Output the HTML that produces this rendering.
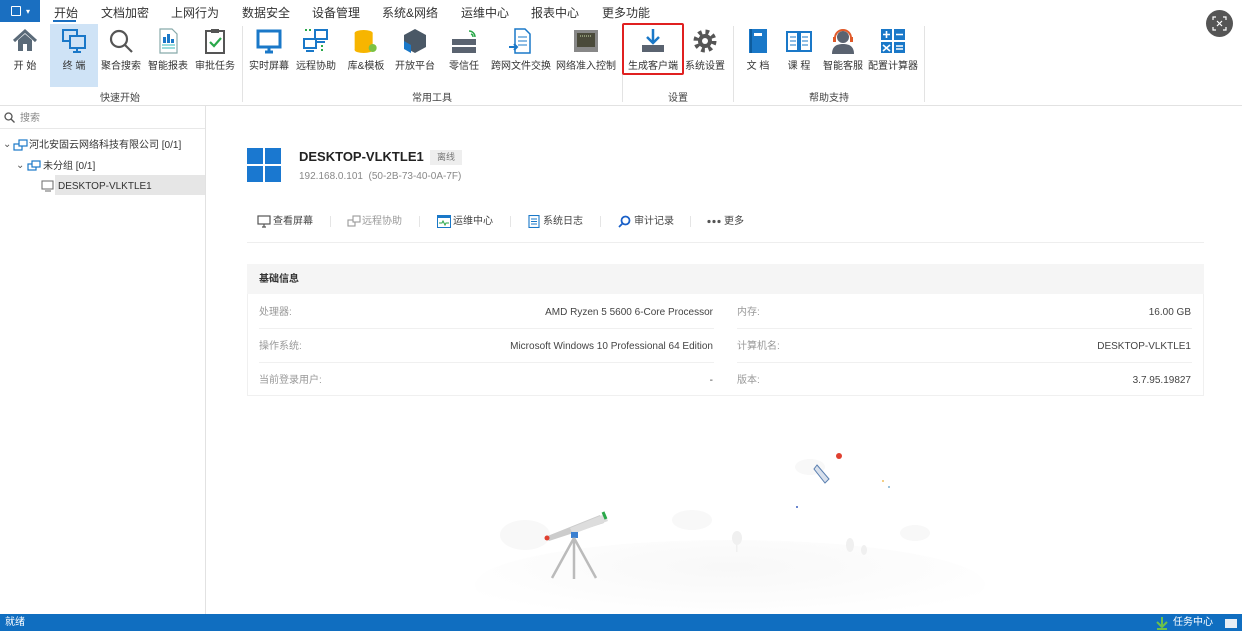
<!DOCTYPE html>
<html><head><meta charset="utf-8"><style>
*{margin:0;padding:0;box-sizing:border-box}
body{width:1242px;height:631px;overflow:hidden;background:#fff;font-family:"Liberation Sans","Noto Sans CJK SC",sans-serif;font-size:12px;color:#333;position:relative}
.a{position:absolute;white-space:nowrap;line-height:14px}
.tab{top:6px;font-size:12px;color:#333}
.btn{position:absolute;top:27px;text-align:center;transform:translateX(-50%);font-size:10px;color:#333;line-height:14px}
.btn svg{display:block;margin:0 auto 5px;width:28px;height:28px}
.grp{top:92px;font-size:10px;color:#444}
.sep{position:absolute;top:26px;width:1px;height:76px;background:#e3e3e3}
.lbl{color:#999;font-size:10px}
.val{color:#444;font-size:10px;text-align:right}
.act{top:215px;font-size:10px;color:#444}
.vs{position:absolute;top:216px;width:1px;height:11px;background:#e5e5e5}
</style></head><body>
<!-- menu bar -->
<div class="a" style="left:0;top:0;width:40px;height:22px;background:#1a6fc1"></div>
<div class="a" style="left:11px;top:6px;width:10px;height:10px;border:1.5px solid #fff;border-radius:1px"></div>
<div class="a" style="left:26px;top:5px;color:#fff;font-size:8px">▾</div>
<div class="a tab" style="left:54px">开始</div>
<div class="a" style="left:53px;top:20px;width:23px;height:2px;background:#1a6fc1"></div>
<div class="a tab" style="left:101px">文档加密</div>
<div class="a tab" style="left:171px">上网行为</div>
<div class="a tab" style="left:242px">数据安全</div>
<div class="a tab" style="left:312px">设备管理</div>
<div class="a tab" style="left:382px">系统&amp;网络</div>
<div class="a tab" style="left:461px">运维中心</div>
<div class="a tab" style="left:531px">报表中心</div>
<div class="a tab" style="left:602px">更多功能</div>
<div class="a" style="left:1206px;top:10px;width:27px;height:27px;border-radius:50%;background:#555"></div>
<svg class="a" style="left:1211px;top:15px" width="17" height="17" viewBox="0 0 17 17" fill="none" stroke="#fff" stroke-width="1.2"><path d="M2 5V2h3M12 2h3v3M15 12v3h-3M5 15H2v-3M6 6l5 5M11 6l-5 5"/></svg>

<!-- ribbon -->
<div class="a" style="left:50px;top:24px;width:48px;height:63px;background:#cfe3f6"></div>
<div class="btn" style="left:25px"><svg viewBox="0 0 28 28"><path d="M3 14L14 4l11 10" stroke="#5a6a78" stroke-width="3" fill="none"/><path d="M7 13v11h14V13L14 7z" fill="#5a6a78"/><rect x="12" y="17" width="4" height="7" fill="#fff"/></svg>开 始</div>
<div class="btn" style="left:74px"><svg viewBox="0 0 28 28" fill="none" stroke="#1a78c8" stroke-width="2"><rect x="3" y="3" width="14" height="11"/><rect x="10" y="9" width="15" height="12" fill="#cfe3f6"/><path d="M17 21v3M13 25h8"/></svg>终 端</div>
<div class="btn" style="left:121px"><svg viewBox="0 0 28 28" fill="none" stroke="#555" stroke-width="2.2"><circle cx="12" cy="12" r="8"/><path d="M18 18l7 7"/></svg>聚合搜索</div>
<div class="btn" style="left:168px"><svg viewBox="0 0 28 28"><path d="M6 2h12l5 5v19H6z" fill="#fff" stroke="#8aa" stroke-width="1.2"/><rect x="9" y="10" width="3" height="6" fill="#1a78c8"/><rect x="13" y="7" width="3" height="9" fill="#1a78c8"/><rect x="17" y="12" width="3" height="4" fill="#1a78c8"/><path d="M8 18h13M8 21h13" stroke="#3bb" stroke-width="1"/></svg>智能报表</div>
<div class="btn" style="left:215px"><svg viewBox="0 0 28 28" fill="none"><rect x="5" y="4" width="18" height="22" stroke="#555" stroke-width="2"/><rect x="10" y="2" width="8" height="4" fill="#555"/><path d="M9 15l4 4 7-8" stroke="#2aa84a" stroke-width="2.2"/></svg>审批任务</div>
<div class="sep" style="left:242px"></div>
<div class="btn" style="left:269px"><svg viewBox="0 0 28 28"><rect x="3" y="4" width="22" height="16" fill="none" stroke="#1a78c8" stroke-width="3"/><path d="M10 25h8M14 20v5" stroke="#1a78c8" stroke-width="3"/></svg>实时屏幕</div>
<div class="btn" style="left:316px"><svg viewBox="0 0 28 28" fill="none" stroke="#1a78c8" stroke-width="2"><rect x="2" y="12" width="12" height="9"/><rect x="13" y="3" width="12" height="9"/><path d="M4 24h8M15 15h8" /><path d="M3 3h6M20 18v6" stroke="#2aa84a" stroke-dasharray="2 2"/></svg>远程协助</div>
<div class="btn" style="left:366px"><svg viewBox="0 0 28 28"><ellipse cx="12" cy="6" rx="9" ry="3" fill="#f7b500"/><rect x="3" y="6" width="18" height="17" fill="#f7b500"/><ellipse cx="12" cy="23" rx="9" ry="3" fill="#f7b500"/><circle cx="21" cy="21" r="4" fill="#7cc242"/></svg>库&amp;模板</div>
<div class="btn" style="left:415px"><svg viewBox="0 0 28 28"><path d="M14 2l11 6v12l-11 6-11-6V8z" fill="#4a5866"/><path d="M3 14l7 4v8l-7-4z" fill="#1a78c8"/></svg>开放平台</div>
<div class="btn" style="left:464px"><svg viewBox="0 0 28 28"><rect x="2" y="12" width="24" height="6" fill="#5a6370"/><rect x="2" y="20" width="24" height="6" fill="#5a6370"/><path d="M19 4a6 6 0 0 1 6 6M21 7a3 3 0 0 1 2 3" stroke="#2aa84a" stroke-width="1.5" fill="none"/></svg>零信任</div>
<div class="btn" style="left:521px"><svg viewBox="0 0 28 28"><path d="M8 2h10l5 5v19H8z" fill="#fff" stroke="#1a78c8" stroke-width="1.5"/><path d="M11 10h9M11 14h9M11 18h9" stroke="#1a78c8"/><path d="M2 20h8M7 17l3 3-3 3" stroke="#1a78c8" stroke-width="2" fill="none"/></svg>跨网文件交换</div>
<div class="btn" style="left:586px"><svg viewBox="0 0 28 28"><rect x="2" y="3" width="24" height="22" fill="#888"/><rect x="5" y="6" width="18" height="14" fill="#4a4a3a"/><path d="M8 9h12" stroke="#cda" stroke-dasharray="1 1"/></svg>网络准入控制</div>
<div class="sep" style="left:622px"></div>
<div class="btn" style="left:653px"><svg viewBox="0 0 28 28"><path d="M14 2v13M8 10l6 6 6-6" stroke="#1a78c8" stroke-width="2.5" fill="none"/><rect x="3" y="18" width="22" height="7" fill="#5a6370"/></svg>生成客户端</div>
<div class="a" style="left:622px;top:23px;width:62px;height:52px;border:2px solid #e02020;border-radius:2px"></div>
<div class="btn" style="left:705px"><svg viewBox="0 0 28 28"><circle cx="14" cy="14" r="9" fill="none" stroke="#555" stroke-width="5" stroke-dasharray="3.5 3.6"/><circle cx="14" cy="14" r="7" fill="#555"/><circle cx="14" cy="14" r="3" fill="#fff"/></svg>系统设置</div>
<div class="sep" style="left:733px"></div>
<div class="btn" style="left:758px"><svg viewBox="0 0 28 28"><rect x="5" y="2" width="18" height="24" fill="#1a78c8"/><rect x="10" y="6" width="8" height="3" fill="#fff"/><path d="M7 2v24" stroke="#0d5c9e" stroke-width="2"/></svg>文 档</div>
<div class="btn" style="left:799px"><svg viewBox="0 0 28 28"><path d="M2 5h11v19H2zM15 5h11v19H15z" fill="#fff" stroke="#1a78c8" stroke-width="2"/><path d="M5 10h6M5 14h6M5 18h6M17 10h6M17 14h6M17 18h6" stroke="#1a78c8"/></svg>课 程</div>
<div class="btn" style="left:843px"><svg viewBox="0 0 28 28"><circle cx="14" cy="10" r="6" fill="#5a6370"/><path d="M3 27c0-8 5-10 11-10s11 2 11 10z" fill="#5a6370"/><path d="M6 11a8 8 0 0 1 16 0" stroke="#e05a2a" stroke-width="2" fill="none"/><rect x="4" y="10" width="3" height="5" fill="#e05a2a"/><rect x="21" y="10" width="3" height="5" fill="#e05a2a"/></svg>智能客服</div>
<div class="btn" style="left:893px"><svg viewBox="0 0 28 28"><rect x="2" y="2" width="11" height="11" fill="#1a78c8"/><rect x="15" y="2" width="11" height="11" fill="#1a78c8"/><rect x="2" y="15" width="11" height="11" fill="#1a78c8"/><rect x="15" y="15" width="11" height="11" fill="#1a78c8"/><path d="M4 7.5h7M7.5 4v7M17 7.5h7M4 18l7 6M11 18l-7 6M17 19h7M17 22h7" stroke="#fff" stroke-width="1.6"/></svg>配置计算器</div>
<div class="sep" style="left:924px"></div>
<div class="a grp" style="left:100px">快速开始</div>
<div class="a grp" style="left:412px">常用工具</div>
<div class="a grp" style="left:668px">设置</div>
<div class="a grp" style="left:809px">帮助支持</div>
<div class="a" style="left:0;top:105px;width:1242px;height:1px;background:#e2e2e2"></div>

<!-- left panel -->
<div class="a" style="left:205px;top:106px;width:1px;height:508px;background:#e2e2e2"></div>
<svg class="a" style="left:4px;top:112px" width="11" height="11" viewBox="0 0 11 11" fill="none" stroke="#555" stroke-width="1.3"><circle cx="4.5" cy="4.5" r="3.5"/><path d="M7 7l3.5 3.5"/></svg>
<div class="a" style="left:20px;top:112px;font-size:10px;color:#888">搜索</div>
<div class="a" style="left:0;top:128px;width:205px;height:1px;background:#e8e8e8"></div>
<div class="a" style="left:3px;top:138px;font-size:10px;color:#555">⌄</div>
<svg class="a" style="left:13px;top:139px" width="15" height="13" viewBox="0 0 15 13" fill="none" stroke="#1a78c8" stroke-width="1.2"><rect x="1" y="5" width="8" height="6"/><rect x="6" y="1" width="8" height="6" fill="#fff"/></svg>
<div class="a" style="left:29px;top:139px;font-size:10px;color:#333">河北安固云网络科技有限公司 [0/1]</div>
<div class="a" style="left:16px;top:159px;font-size:10px;color:#555">⌄</div>
<svg class="a" style="left:27px;top:160px" width="14" height="13" viewBox="0 0 14 13" fill="none" stroke="#1a78c8" stroke-width="1.2"><rect x="1" y="4" width="8" height="6"/><rect x="5" y="1" width="8" height="6" fill="#fff"/></svg>
<div class="a" style="left:43px;top:160px;font-size:10px;color:#333">未分组 [0/1]</div>
<div class="a" style="left:55px;top:175px;width:150px;height:20px;background:#e6e6e6"></div>
<svg class="a" style="left:41px;top:180px" width="14" height="13" viewBox="0 0 14 13" fill="none" stroke="#777" stroke-width="1.1"><rect x="1" y="1" width="11" height="8"/><path d="M4 11h6"/></svg>
<div class="a" style="left:58px;top:180px;font-size:10px;color:#333">DESKTOP-VLKTLE1</div>

<!-- device header -->
<div class="a" style="left:247px;top:148px;width:16px;height:16px;background:#1a78d0"></div>
<div class="a" style="left:265px;top:148px;width:16px;height:16px;background:#1a78d0"></div>
<div class="a" style="left:247px;top:166px;width:16px;height:16px;background:#1a78d0"></div>
<div class="a" style="left:265px;top:166px;width:16px;height:16px;background:#1a78d0"></div>
<div class="a" style="left:299px;top:150px;font-size:13px;font-weight:bold;color:#222">DESKTOP-VLKTLE1</div>
<div class="a" style="left:430px;top:150px;width:32px;height:15px;background:#eee;font-size:9px;color:#777;text-align:center;line-height:15px">离线</div>
<div class="a" style="left:299px;top:170px;font-size:10px;color:#888">192.168.0.101&nbsp; (50-2B-73-40-0A-7F)</div>

<!-- actions -->
<svg class="a" style="left:257px;top:215px" width="14" height="13" viewBox="0 0 14 13" fill="none" stroke="#555" stroke-width="1.2"><rect x="1" y="1" width="12" height="8"/><path d="M5 12h4M7 9v3"/></svg>
<div class="a act" style="left:273px">查看屏幕</div>
<div class="vs" style="left:330px"></div>
<svg class="a" style="left:347px;top:215px" width="14" height="13" viewBox="0 0 14 13" fill="none" stroke="#999" stroke-width="1.1"><rect x="1" y="5" width="7" height="6"/><rect x="6" y="1" width="7" height="6" fill="#fff"/></svg>
<div class="a act" style="left:362px;color:#999">远程协助</div>
<div class="vs" style="left:419px"></div>
<svg class="a" style="left:437px;top:215px" width="14" height="13" viewBox="0 0 14 13"><rect x="0.5" y="0.5" width="13" height="12" fill="#fff" stroke="#1a78c8"/><rect x="0" y="0" width="14" height="3" fill="#1a78c8"/><path d="M2 8h3l1-2 2 4 1-2h3" stroke="#2aa84a" fill="none"/></svg>
<div class="a act" style="left:453px">运维中心</div>
<div class="vs" style="left:510px"></div>
<svg class="a" style="left:528px;top:215px" width="12" height="13" viewBox="0 0 12 13" fill="none" stroke="#1a78c8" stroke-width="1.1"><rect x="1" y="0.5" width="10" height="12"/><path d="M3 4h6M3 6.5h6M3 9h6"/></svg>
<div class="a act" style="left:543px">系统日志</div>
<div class="vs" style="left:600px"></div>
<svg class="a" style="left:618px;top:215px" width="13" height="13" viewBox="0 0 13 13" fill="none" stroke="#1a60c8" stroke-width="1.8"><circle cx="7.5" cy="5.5" r="4"/><path d="M4.5 8.5L1 12"/></svg>
<div class="a act" style="left:634px">审计记录</div>
<div class="vs" style="left:690px"></div>
<svg class="a" style="left:707px;top:219px" width="14" height="5" viewBox="0 0 14 5" fill="#555"><circle cx="2" cy="2.5" r="1.6"/><circle cx="7" cy="2.5" r="1.6"/><circle cx="12" cy="2.5" r="1.6"/></svg>
<div class="a act" style="left:724px">更多</div>
<div class="a" style="left:247px;top:242px;width:957px;height:1px;background:#eee"></div>

<!-- info card -->
<div class="a" style="left:247px;top:264px;width:957px;height:132px;border:1px solid #f0f0f0"></div>
<div class="a" style="left:247px;top:264px;width:957px;height:30px;background:#f5f5f5"></div>
<div class="a" style="left:259px;top:273px;font-size:10px;font-weight:bold;color:#333">基础信息</div>
<div class="a" style="left:259px;top:328px;width:455px;height:1px;background:#f0f0f0"></div>
<div class="a" style="left:259px;top:362px;width:455px;height:1px;background:#f0f0f0"></div>
<div class="a" style="left:737px;top:328px;width:455px;height:1px;background:#f0f0f0"></div>
<div class="a" style="left:737px;top:362px;width:455px;height:1px;background:#f0f0f0"></div>
<div class="a lbl" style="left:259px;top:306px">处理器:</div>
<div class="a lbl" style="left:259px;top:340px">操作系统:</div>
<div class="a lbl" style="left:259px;top:374px">当前登录用户:</div>
<div class="a val" style="right:529px;top:306px">AMD Ryzen 5 5600 6-Core Processor</div>
<div class="a val" style="right:529px;top:340px">Microsoft Windows 10 Professional 64 Edition</div>
<div class="a val" style="right:529px;top:374px">-</div>
<div class="a lbl" style="left:737px;top:306px">内存:</div>
<div class="a lbl" style="left:737px;top:340px">计算机名:</div>
<div class="a lbl" style="left:737px;top:374px">版本:</div>
<div class="a val" style="right:51px;top:306px">16.00 GB</div>
<div class="a val" style="right:51px;top:340px">DESKTOP-VLKTLE1</div>
<div class="a val" style="right:51px;top:374px">3.7.95.19827</div>

<!-- illustration -->
<svg class="a" style="left:470px;top:440px" width="520" height="174" viewBox="0 0 520 174">
<defs><radialGradient id="g" cx="0.5" cy="0.3" r="0.6"><stop offset="0" stop-color="#f8f8f8"/><stop offset="1" stop-color="#fff"/></radialGradient></defs>
<ellipse cx="260" cy="145" rx="255" ry="45" fill="url(#g)"/>
<ellipse cx="55" cy="95" rx="25" ry="15" fill="#f8f8f8"/>
<ellipse cx="222" cy="80" rx="20" ry="10" fill="#f8f8f8"/>
<ellipse cx="445" cy="93" rx="15" ry="8" fill="#f8f8f8"/>
<ellipse cx="340" cy="27" rx="15" ry="8" fill="#f8f8f8"/>
<ellipse cx="267" cy="98" rx="5" ry="7" fill="#f0f0f0"/><rect x="266" y="100" width="1.5" height="12" fill="#f0f0f0"/>
<ellipse cx="380" cy="105" rx="4" ry="7" fill="#f0f0f0"/><ellipse cx="394" cy="110" rx="3" ry="5" fill="#f0f0f0"/>
<path d="M75 97l55-22 4 8-55 18z" fill="#ccc"/><path d="M100 88l35-14 3 7-35 13z" fill="#ddd"/>
<circle cx="77" cy="98" r="2.5" fill="#e04030"/><path d="M133 72l3 7" stroke="#2aa84a" stroke-width="3"/>
<rect x="101" y="92" width="7" height="6" fill="#3a7fd0"/>
<path d="M104 98L82 138M104 98L126 138M104 98v41" stroke="#bbb" stroke-width="2.5"/>
<circle cx="369" cy="16" r="3" fill="#e04030"/>
<path d="M347 25l12 14-4 4-11-14z" fill="#d8e0ec" stroke="#5a7fb0"/>
<circle cx="327" cy="67" r="1" fill="#3a5fc0"/><circle cx="419" cy="47" r="1" fill="#7aaed0"/><circle cx="413" cy="41" r="1" fill="#f0c060"/>
</svg>

<!-- status bar -->
<div class="a" style="left:0;top:614px;width:1242px;height:17px;background:#106ec0"></div>
<div class="a" style="left:5px;top:616px;font-size:10px;color:#fff">就绪</div>
<svg class="a" style="left:1156px;top:617px" width="12" height="13" viewBox="0 0 12 13"><path d="M6 0v10M1 5l5 5 5-5M1 12h10" stroke="#6cc04a" stroke-width="2" fill="none"/></svg>
<div class="a" style="left:1173px;top:616px;font-size:10px;color:#fff">任务中心</div>
<div class="a" style="left:1225px;top:619px;width:12px;height:9px;background:#e8eef5"></div>
</body></html>
